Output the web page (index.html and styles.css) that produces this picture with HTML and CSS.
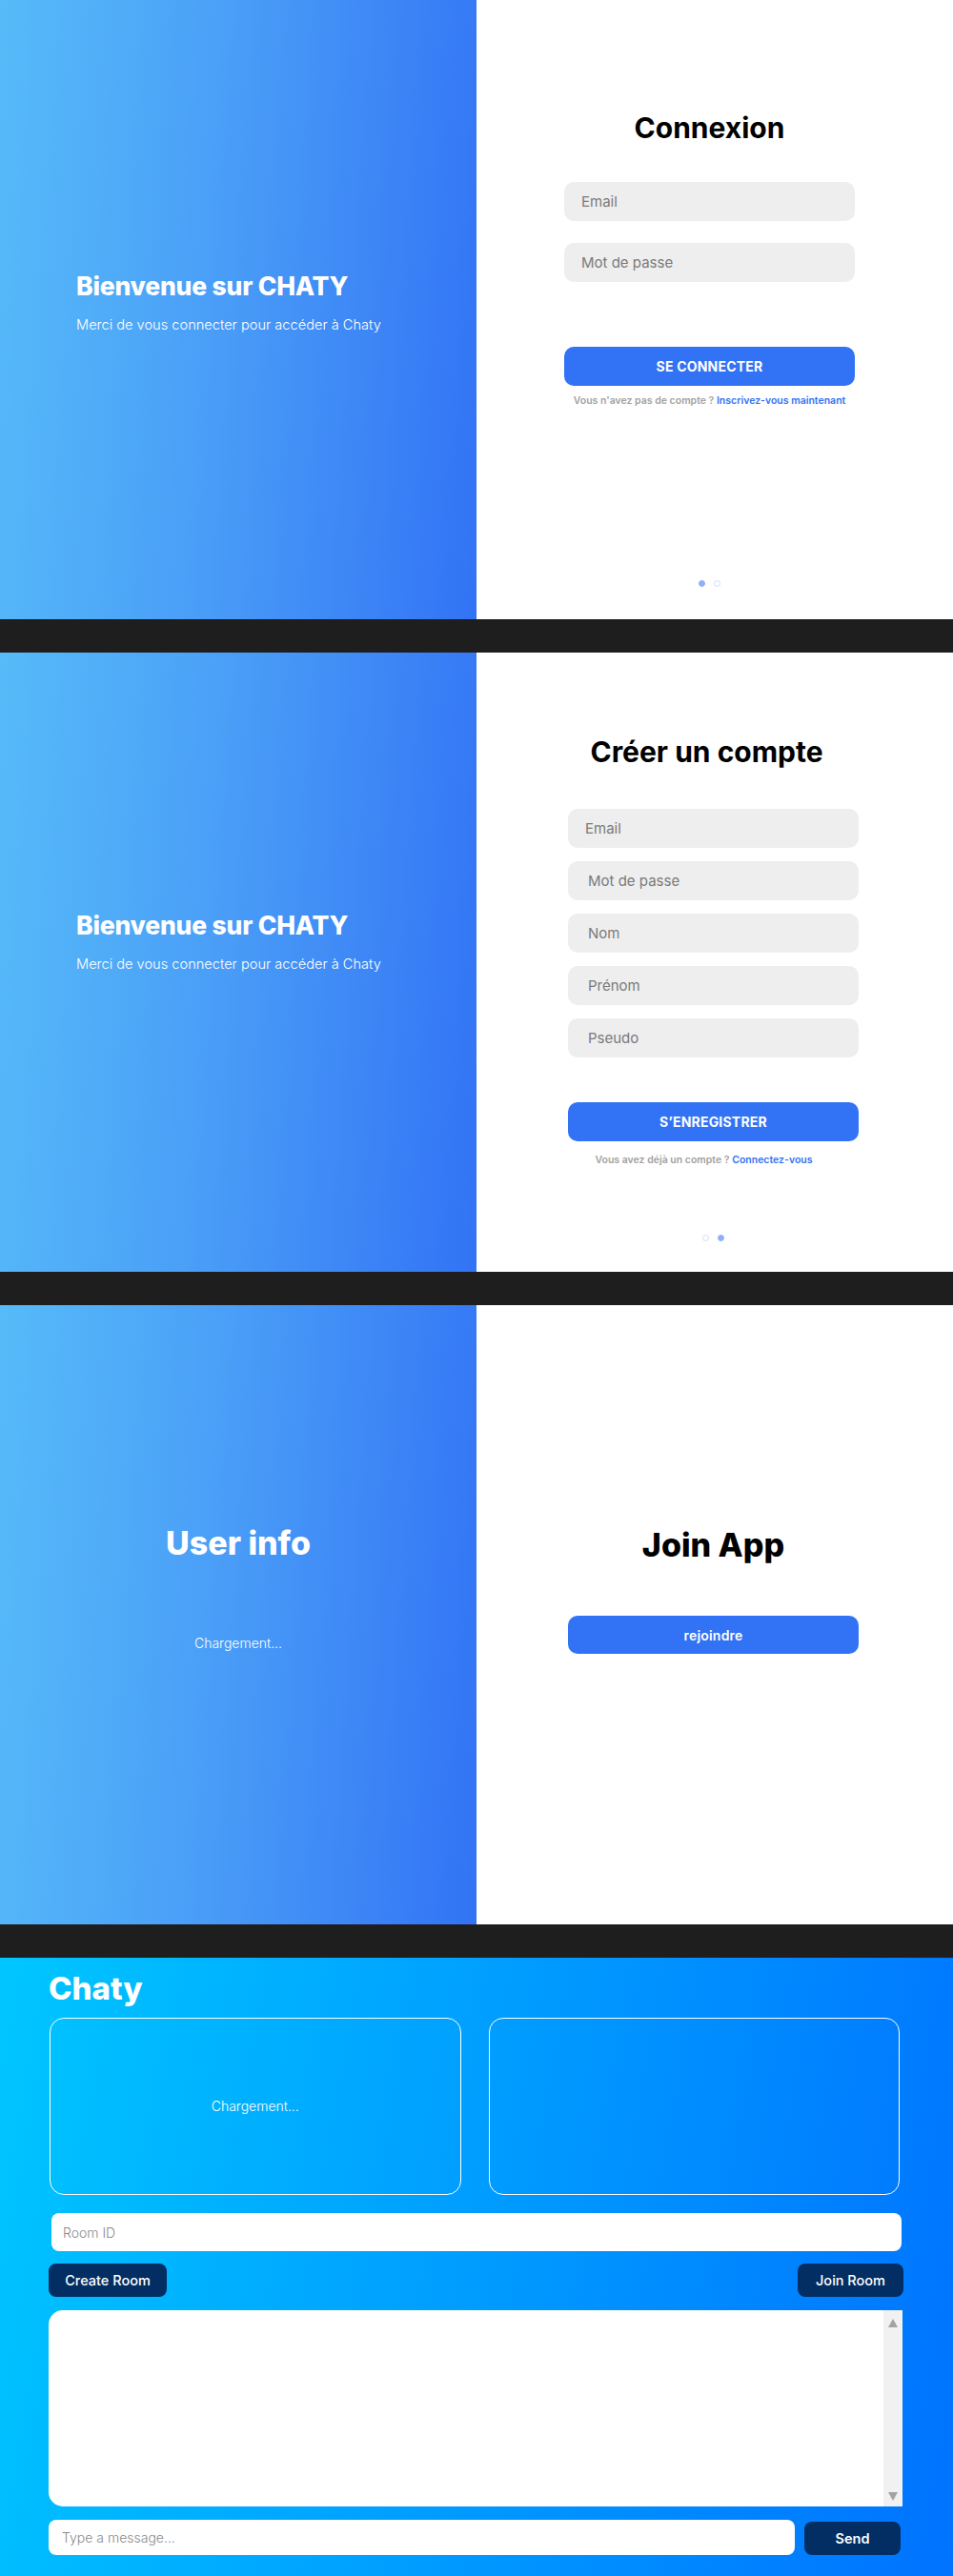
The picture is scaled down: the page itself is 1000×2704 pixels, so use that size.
FILE: index.html
```html
<!DOCTYPE html>
<html lang="fr">
<head>
<meta charset="utf-8">
<title>Chaty</title>
<link rel="stylesheet" href="styles.css">
</head>
<body>
<div class="page">

  <section class="split">
    <div class="side side--welcome">
      <h2 class="side-title">Bienvenue sur CHATY</h2>
      <p class="side-text">Merci de vous connecter pour accéder à Chaty</p>
    </div>
    <div class="form-panel form-panel--login">
      <h1 class="form-title">Connexion</h1>
      <input class="field field--first" type="text" placeholder="Email">
      <input class="field field--login" type="password" placeholder="Mot de passe">
      <button class="primary-btn primary-btn--login">SE CONNECTER</button>
      <p class="switch-text">Vous n'avez pas de compte ? <a class="switch-link">Inscrivez-vous maintenant</a></p>
      <div class="dots dots--login"><span class="dot dot--on"></span><span class="dot"></span></div>
    </div>
  </section>

  <section class="split">
    <div class="side side--welcome side--register">
      <h2 class="side-title">Bienvenue sur CHATY</h2>
      <p class="side-text">Merci de vous connecter pour accéder à Chaty</p>
    </div>
    <div class="form-panel form-panel--register">
      <h1 class="form-title">Créer un compte</h1>
      <input class="field field--first-reg" type="text" placeholder="Email">
      <input class="field field--reg" type="password" placeholder="Mot de passe">
      <input class="field field--reg" type="text" placeholder="Nom">
      <input class="field field--reg" type="text" placeholder="Prénom">
      <input class="field field--reg" type="text" placeholder="Pseudo">
      <button class="primary-btn primary-btn--register">S’ENREGISTRER</button>
      <p class="switch-text switch-text--register">Vous avez déjà un compte ? <a class="switch-link">Connectez-vous</a></p>
      <div class="dots dots--register"><span class="dot"></span><span class="dot dot--on"></span></div>
    </div>
  </section>

  <section class="split">
    <div class="side side--info">
      <h2 class="big-title big-title--light">User info</h2>
      <p class="loading">Chargement...</p>
    </div>
    <div class="form-panel form-panel--join">
      <h1 class="big-title">Join App</h1>
      <button class="primary-btn primary-btn--join">rejoindre</button>
    </div>
  </section>

  <section class="chat">
    <h1 class="chat-logo">Chaty</h1>
    <div class="cards">
      <div class="card"><span class="loading">Chargement...</span></div>
      <div class="card"></div>
    </div>
    <input class="room-input" type="text" placeholder="Room ID">
    <div class="room-actions">
      <button class="dark-btn dark-btn--create">Create Room</button>
      <button class="dark-btn dark-btn--join">Join Room</button>
    </div>
    <div class="messages">
      <div class="messages-body"></div>
      <div class="scrollbar"><span class="arrow arrow--up"></span><span class="arrow arrow--down"></span></div>
    </div>
    <div class="composer">
      <input class="msg-input" type="text" placeholder="Type a message...">
      <button class="dark-btn send-btn">Send</button>
    </div>
  </section>

</div>
</body>
</html>
```

FILE: styles.css
```css
* { box-sizing: border-box; }

html, body {
  margin: 0;
  padding: 0;
}

body {
  background: #1e1e1e;
  font-family: "Inter", "Liberation Sans", sans-serif;
  color: #000;
}

.page {
  display: flex;
  flex-direction: column;
  gap: 35px;
}

/* ---------- split sections ---------- */
.split {
  display: flex;
  height: 650px;
}

.side {
  width: 500px;
  flex: none;
  background: linear-gradient(94deg, #56bbf9 0%, #4a9ef7 45%, #3273f5 100%);
  color: #fff;
  display: flex;
  flex-direction: column;
}

.side--welcome {
  padding: 282px 0 0 80px;
}

.side--register {
  padding-top: 268px;
}

.side-title {
  margin: 0;
  font-size: 26.5px;
  line-height: 36px;
  font-weight: 800;
  letter-spacing: -0.2px;
}

.side-text {
  margin: 13px 0 0;
  font-size: 14.6px;
  line-height: 20px;
  font-weight: 300;
}

.side--info {
  align-items: center;
  padding-top: 230px;
}

.big-title {
  margin: 0;
  font-size: 34px;
  line-height: 40px;
  font-weight: 800;
}

.big-title--light {
  color: #fff;
}

.loading {
  margin: 75px 0 0;
  font-size: 14px;
  line-height: 20px;
  font-weight: 300;
  color: #fff;
}

.form-panel {
  position: relative;
  flex: 1;
  background: #fff;
  display: flex;
  flex-direction: column;
  align-items: stretch;
}

.form-panel--login {
  padding: 116px 103px 0 92px;
}

.form-panel--register {
  padding: 86px 99px 0 96px;
}

.form-panel--join {
  padding: 232px 100px 0 96px;
  align-items: center;
}

.form-title {
  margin: 0;
  text-align: center;
  font-size: 30px;
  line-height: 36px;
  font-weight: 700;
}

.form-panel--register .form-title {
  padding-right: 14px;
}

.field {
  display: block;
  width: 100%;
  height: 41px;
  border: none;
  outline: none;
  border-radius: 10px;
  background: #eeeeee;
  padding: 0 18px;
  font-family: inherit;
  font-size: 15px;
  font-weight: 400;
  color: #333;
}

.field::placeholder {
  color: #7a7a7a;
}

.field--first { margin-top: 39px; }
.field--login { margin-top: 23px; }
.field--first-reg { margin-top: 42px; }
.field--reg { margin-top: 14px; padding-left: 21px; }

.primary-btn {
  display: block;
  width: 100%;
  height: 41px;
  border: none;
  border-radius: 10px;
  background: #3272f5;
  color: #fff;
  font-family: inherit;
  font-size: 14px;
  font-weight: 700;
  letter-spacing: 0.2px;
}

.primary-btn--login { margin-top: 68px; }
.primary-btn--register { margin-top: 47px; }
.primary-btn--join {
  margin-top: 54px;
  width: 305px;
  height: 40px;
  font-weight: 600;
}

.switch-text {
  margin: 9px 0 0;
  text-align: center;
  font-size: 10.5px;
  line-height: 14px;
  font-weight: 600;
  color: #a2a2a2;
  white-space: nowrap;
}

.switch-text--register {
  margin-top: 13px;
  padding-right: 20px;
}

.switch-link {
  color: #3272f5;
}

.dots {
  position: absolute;
  left: 0;
  right: 0;
  display: flex;
  justify-content: center;
  gap: 9px;
}

.dots--login { bottom: 34px; padding-right: 12px; }
.dots--register { bottom: 32px; padding-right: 4px; }

.dot {
  width: 7px;
  height: 7px;
  border-radius: 50%;
  border: 1px solid #cfdcfb;
  background: #fff;
}

.dot--on {
  background: #8fb0f8;
  border-color: #8fb0f8;
}

/* ---------- chat section ---------- */
.chat {
  height: 649px;
  background: linear-gradient(100deg, #00c6ff 0%, #0072ff 100%);
  padding: 12px 53px 0 51px;
  display: flex;
  flex-direction: column;
}

.chat-logo {
  margin: 0;
  font-size: 33px;
  line-height: 40px;
  font-weight: 800;
  color: #fff;
}

.cards {
  margin: 11px 3px 0 1px;
  display: grid;
  grid-template-columns: 1fr 1fr;
  gap: 29px;
}

.card {
  height: 186px;
  border: 1px solid #fff;
  border-radius: 15px;
  display: flex;
  align-items: center;
  justify-content: center;
}

.card .loading {
  margin: 0;
}

.room-input {
  margin: 19px 1px 0 3px;
  height: 40px;
  border: none;
  outline: none;
  border-radius: 8px;
  background: #fff;
  padding: 0 12px;
  font-family: inherit;
  font-size: 14px;
  font-weight: 300;
}

.room-input::placeholder,
.msg-input::placeholder {
  color: #8a8a8a;
}

.room-actions {
  margin-top: 13px;
  display: flex;
  justify-content: space-between;
}

.dark-btn {
  height: 35px;
  border: none;
  border-radius: 8px;
  background: #022e63;
  color: #fff;
  font-family: inherit;
  font-size: 14.5px;
  font-weight: 500;
}

.dark-btn--create {
  width: 124px;
  padding: 0;
}

.dark-btn--join {
  width: 111px;
  padding: 0;
  margin-right: -1px;
}

.messages {
  margin-top: 14px;
  height: 206px;
  display: flex;
}

.messages-body {
  flex: 1;
  background: #fff;
  border-radius: 15px 0 0 15px;
}

.scrollbar {
  width: 20px;
  background: #f1f1f1;
  display: flex;
  flex-direction: column;
  justify-content: space-between;
  align-items: center;
  padding: 9px 0 6px;
}

.arrow {
  width: 0;
  height: 0;
  border-left: 5px solid transparent;
  border-right: 5px solid transparent;
}

.arrow--up { border-bottom: 9px solid #a3a3a3; }
.arrow--down { border-top: 9px solid #a3a3a3; }

.composer {
  margin-top: 14px;
  display: flex;
  align-items: flex-end;
  gap: 10px;
}

.msg-input {
  width: 783px;
  height: 37px;
  border: none;
  outline: none;
  border-radius: 8px;
  background: #fff;
  padding: 0 14px;
  font-family: inherit;
  font-size: 14px;
  font-weight: 300;
}

.send-btn {
  width: 101px;
  height: 35px;
  padding: 0;
  font-weight: 600;
}
```
